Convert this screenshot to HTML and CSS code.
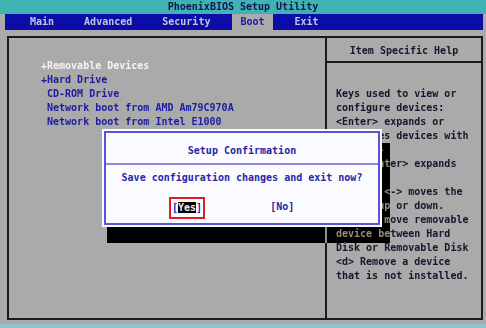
FILE: index.html
```html
<!DOCTYPE html>
<html>
<head>
    <title>PhoenixBIOS Setup Utility</title>
    <link rel="stylesheet" href="styles.css">
</head>
<body>
    <div class="title">PhoenixBIOS Setup Utility</div>

    <!-- top menu, Boot is the open tab -->
    <div class="menu">
        <span class="menu-item">Main</span>
        <span class="menu-item">Advanced</span>
        <span class="menu-item">Security</span>
        <span class="menu-item active">Boot</span>
        <span class="menu-item">Exit</span>
    </div>

    <div class="frame">
        <div class="boot-list">
            <div class="boot-item current">+Removable Devices</div>
            <div class="boot-item">+Hard Drive</div>
            <div class="boot-item"> CD-ROM Drive</div>
            <div class="boot-item"> Network boot from AMD Am79C970A</div>
            <div class="boot-item"> Network boot from Intel E1000</div>
        </div>

        <div class="help">
            <div class="help-title">Item Specific Help</div>
            <div class="help-text">Keys used to view or
configure devices:
&lt;Enter&gt; expands or
collapses devices with
a + or -
&lt;Ctrl+Enter&gt; expands
all
&lt;+&gt; and &lt;-&gt; moves the
device up or down.
&lt;n&gt; May move removable
device between Hard
Disk or Removable Disk
&lt;d&gt; Remove a device
that is not installed.</div>
        </div>
    </div>

    <div class="status"></div>

    <!-- confirmation popup and its text-mode shadow -->
    <div class="dialog-shadow"></div>
    <div class="dialog">
        <div class="dialog-inner">
            <div class="dialog-title">Setup Confirmation</div>
            <div class="dialog-msg">Save configuration changes and exit now?</div>
            <div class="dialog-buttons">
                <span class="choice selected">[<span class="choice-hl">Yes</span>]</span>
                <span class="choice">[No]</span>
            </div>
        </div>
    </div>
</body>
</html>
```

FILE: styles.css
```css
body {
    margin: 0;
    width: 486px;
    height: 328px;
    overflow: hidden;
    background-color: #aaaaaa;
    font-family: 'DejaVu Sans Mono', 'Liberation Mono', monospace;
    font-weight: bold;
    font-size: 10px;
    line-height: 14px;
    position: relative;
}

.title {
    height: 14px;
    background-color: #3fb3b3;
    color: #14144e;
    text-align: center;
    line-height: 14px;
}

.menu {
    display: flex;
    gap: 14px;
    height: 16px;
    line-height: 16px;
    margin: 0 3px 0 5px;
    padding-left: 17px;
    background-color: #0c0ca8;
}

.menu-item {
    padding: 0 8px;
    color: #c4c4dc;
}

.menu-item.active {
    background-color: #aaaaaa;
    color: #2020a0;
}

.frame {
    display: grid;
    grid-template-columns: 316px 1fr;
    height: 280px;
    margin: 6px 3px 0 7px;
    border: 2px solid #1a1a1a;
}

.boot-list {
    padding: 21px 0 0 32px;
    color: #1c1ca0;
}

.boot-item {
    white-space: pre;
}

.boot-item.current {
    color: #f4f4f4;
}

.help {
    border-left: 2px solid #1a1a1a;
    color: #16162c;
}

.help-title {
    height: 25px;
    padding-top: 6px;
    box-sizing: border-box;
    text-align: center;
    border-bottom: 2px solid #1a1a1a;
}

.help-text {
    padding: 24px 0 0 9px;
    white-space: pre;
}

.status {
    height: 4px;
    margin-top: 4px;
    background-color: #8cc8cc;
}

.dialog-shadow {
    position: absolute;
    left: 107px;
    top: 143px;
    width: 283px;
    height: 100px;
    background-color: #aaaaaa;
    mix-blend-mode: difference;
}

.dialog {
    position: absolute;
    left: 102px;
    top: 129px;
    width: 280px;
    height: 98px;
    box-sizing: border-box;
    padding: 2px;
    background-color: #fbfbff;
}

.dialog-inner {
    height: 100%;
    box-sizing: border-box;
    border: 2px solid #5656d2;
    color: #2626a8;
}

.dialog-title {
    padding: 11px 0 5px;
    text-align: center;
    border-bottom: 2px solid #8a8ae0;
}

.dialog-msg {
    padding-top: 6px;
    text-align: center;
}

.dialog-buttons {
    display: flex;
    gap: 68px;
    padding: 15px 0 0 66px;
}

.choice.selected {
    padding: 1px 0;
    outline: 2px solid #e01c1c;
    outline-offset: 1px;
}

.choice-hl {
    background-color: #000;
    color: #f0f0f0;
}
```
